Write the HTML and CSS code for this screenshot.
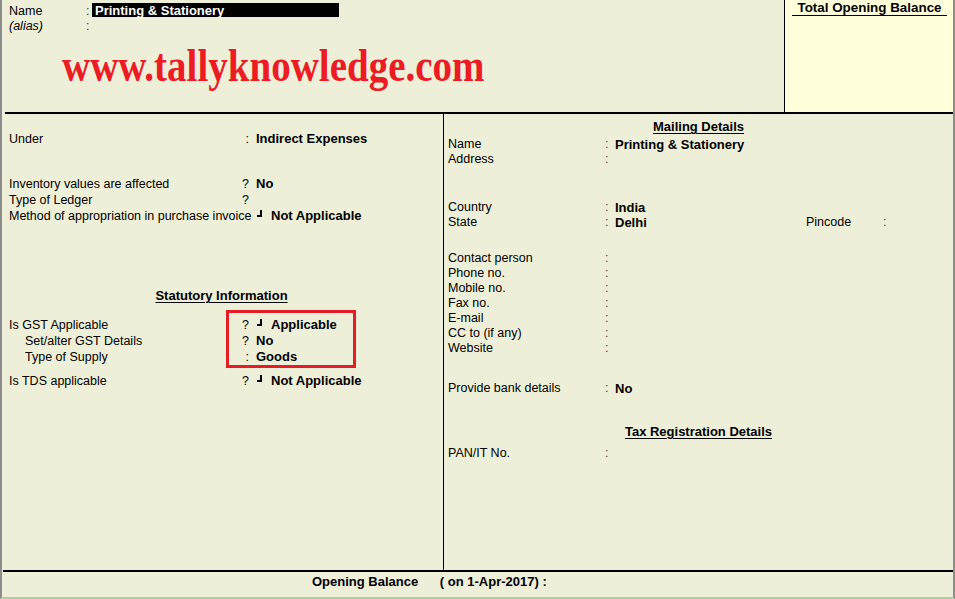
FILE: index.html
```html
<!DOCTYPE html>
<html lang="en">
<head>
    <meta charset="UTF-8">
    <title>Ledger Alteration</title>
    <link rel="stylesheet" href="styles.css">
</head>
<body>
    <div class="screen">
        <div class="top">
            <div class="ident">
                <div class="idrow">
                    <span class="idlabel">Name</span>
                    <span class="idsep">:</span>
                    <span class="namebox">Printing &amp; Stationery</span>
                </div>
                <div class="idrow">
                    <span class="idlabel alias">(alias)</span>
                    <span class="idsep">:</span>
                </div>
                <div class="watermark">www.tallyknowledge.com</div>
            </div>
            <div class="total">
                <div class="total-head">Total Opening Balance</div>
            </div>
        </div>

        <div class="main">
            <div class="left">
                <div class="row">
                    <span class="lbl">Under</span><span class="sep">:</span><span class="val">Indirect Expenses</span>
                </div>

                <div class="row gap-inv">
                    <span class="lbl">Inventory values are affected</span><span class="sep">?</span><span class="val">No</span>
                </div>
                <div class="row">
                    <span class="lbl">Type of Ledger</span><span class="sep">?</span>
                </div>
                <div class="row">
                    <span class="lbl">Method of appropriation in purchase invoice</span><span class="sep"></span><span class="mark"></span><span class="val">Not Applicable</span>
                </div>

                <div class="heading stat-head"><span>Statutory Information</span></div>

                <div class="row gap-gst">
                    <span class="lbl">Is GST Applicable</span><span class="sep">?</span><span class="mark"></span><span class="val">Applicable</span>
                </div>
                <div class="row">
                    <span class="lbl sub">Set/alter GST Details</span><span class="sep">?</span><span class="val">No</span>
                </div>
                <div class="row">
                    <span class="lbl sub">Type of Supply</span><span class="sep">:</span><span class="val">Goods</span>
                </div>
                <div class="row gap-tds">
                    <span class="lbl">Is TDS applicable</span><span class="sep">?</span><span class="mark"></span><span class="val">Not Applicable</span>
                </div>

                <div class="highlight"></div>
            </div>

            <div class="right">
                <div class="heading mail-head"><span>Mailing Details</span></div>
                <div class="rrow gap-name">
                    <span class="rlbl">Name</span><span class="rsep">:</span><span class="val">Printing &amp; Stationery</span>
                </div>
                <div class="rrow">
                    <span class="rlbl">Address</span><span class="rsep">:</span>
                </div>

                <div class="rrow gap-country">
                    <span class="rlbl">Country</span><span class="rsep">:</span><span class="val">India</span>
                </div>
                <div class="rrow">
                    <span class="rlbl">State</span><span class="rsep">:</span><span class="val state-val">Delhi</span>
                    <span class="pin-lbl">Pincode</span><span class="rsep">:</span>
                </div>

                <div class="rrow gap-contact">
                    <span class="rlbl">Contact person</span><span class="rsep">:</span>
                </div>
                <div class="rrow"><span class="rlbl">Phone no.</span><span class="rsep">:</span></div>
                <div class="rrow"><span class="rlbl">Mobile no.</span><span class="rsep">:</span></div>
                <div class="rrow"><span class="rlbl">Fax no.</span><span class="rsep">:</span></div>
                <div class="rrow"><span class="rlbl">E-mail</span><span class="rsep">:</span></div>
                <div class="rrow"><span class="rlbl">CC to (if any)</span><span class="rsep">:</span></div>
                <div class="rrow"><span class="rlbl">Website</span><span class="rsep">:</span></div>

                <div class="rrow gap-bank">
                    <span class="rlbl">Provide bank details</span><span class="rsep">:</span><span class="val">No</span>
                </div>

                <div class="heading tax-head"><span>Tax Registration Details</span></div>
                <div class="rrow gap-pan">
                    <span class="rlbl">PAN/IT No.</span><span class="rsep">:</span>
                </div>
            </div>
        </div>

        <div class="footer">
            <span>Opening Balance</span>
            <span class="footer-date">( on 1-Apr-2017) :</span>
        </div>
    </div>
</body>
</html>
```

FILE: styles.css
```css
body {
    margin: 0;
    padding: 0;
    font-family: "Liberation Sans", Arial, sans-serif;
    font-size: 12.5px;
    color: #000;
    background-color: #eeefd8;
}

.screen {
    width: 955px;
    height: 599px;
    box-sizing: border-box;
    border-left: 2px solid #8c8c8c;
    border-right: 2px solid #8c8c8c;
    border-bottom: 2px solid #a3d6a3;
    background-color: #eeefd8;
    overflow: hidden;
}

/* top part: ledger name + total box */
.top {
    display: flex;
    height: 112px;
}

.ident {
    flex: 1;
    padding: 3px 0 0 7px;
}

.idrow {
    display: flex;
    align-items: flex-start;
    height: 15px;
    line-height: 16px;
}

.idlabel {
    width: 77px;
}

.alias {
    font-style: italic;
}

.idsep {
    width: 6px;
    color: #333;
}

.namebox {
    display: inline-block;
    width: 247px;
    height: 14px;
    line-height: 15px;
    padding-left: 3px;
    box-sizing: border-box;
    background-color: #000;
    color: #fff;
    font-weight: bold;
    font-size: 13px;
}

.watermark {
    display: inline-block;
    margin: 10px 0 0 53px;
    font-family: "Liberation Serif", "Times New Roman", serif;
    font-weight: bold;
    font-size: 39px;
    line-height: 38px;
    color: #ed1c24;
    transform: scaleY(1.18);
    transform-origin: left top;
}

.total {
    width: 169px;
    box-sizing: border-box;
    border-left: 1px solid #000;
    background-color: #ffffdc;
}

.total-head {
    width: 155px;
    margin-left: 7px;
    line-height: 15px;
    text-align: center;
    font-weight: bold;
    font-size: 13.4px;
    border-bottom: 1px solid #000;
}

/* middle part: two columns */
.main {
    display: flex;
    height: 458px;
    margin-left: 3px;
    box-sizing: border-box;
    border-top: 2px solid #000;
}

.left {
    position: relative;
    width: 439px;
    box-sizing: border-box;
    border-right: 1px solid #000;
    padding: 17px 0 0 4px;
}

.right {
    flex: 1;
    padding: 5px 0 0 4px;
}

.row {
    display: flex;
    height: 16px;
    line-height: 16px;
}

.lbl {
    width: 233px;
    flex-shrink: 0;
    white-space: nowrap;
}

.lbl.sub {
    width: 217px;
    padding-left: 16px;
}

.sep {
    width: 14px;
    padding-right: 7px;
    box-sizing: border-box;
    text-align: right;
    flex-shrink: 0;
}

.val {
    font-weight: bold;
    font-size: 13px;
    white-space: nowrap;
}

/* small corner glyph before list values */
.mark {
    display: inline-block;
    width: 3px;
    height: 5px;
    margin: 2px 9px 0 1px;
    border-right: 2px solid #000;
    border-bottom: 2px solid #000;
}

.heading {
    height: 16px;
    line-height: 16px;
    text-align: center;
    font-weight: bold;
    font-size: 13px;
}

.heading span {
    text-decoration: underline;
    text-underline-offset: 2px;
}

.stat-head {
    margin-top: 64px;
    padding-right: 9px;
}

.gap-inv { margin-top: 29px; }
.gap-gst { margin-top: 13px; }
.gap-tds { margin-top: 8px; }

.highlight {
    position: absolute;
    left: 221px;
    top: 196px;
    width: 130px;
    height: 58px;
    box-sizing: border-box;
    border: 3px solid #e51e25;
}

.mail-head,
.tax-head {
    height: 15px;
    line-height: 15px;
    padding-right: 4px;
}

.rrow {
    display: flex;
    height: 15px;
    line-height: 15px;
}

.rlbl {
    width: 157px;
    flex-shrink: 0;
}

.rsep {
    width: 10px;
    flex-shrink: 0;
    color: #444;
}

.state-val {
    width: 191px;
}

.pin-lbl {
    width: 77px;
}

.gap-name { margin-top: 3px; }
.gap-country { margin-top: 33px; }
.gap-contact { margin-top: 21px; }
.gap-bank { margin-top: 25px; }
.tax-head { margin-top: 28px; }
.gap-pan { margin-top: 7px; }

/* bottom line */
.footer {
    height: 27px;
    margin-left: 1px;
    box-sizing: border-box;
    border-top: 2px solid #000;
    padding-left: 309px;
    line-height: 20px;
    font-weight: bold;
    font-size: 13px;
}

.footer-date {
    margin-left: 18px;
}
```
